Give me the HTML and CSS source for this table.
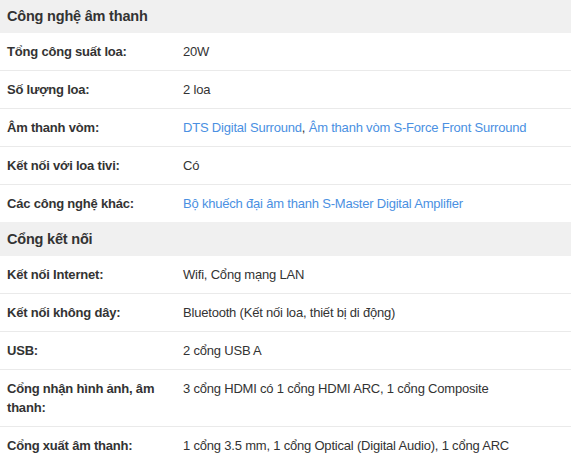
FILE: index.html
```html
<!DOCTYPE html>
<html lang="vi">
<head>
<meta charset="utf-8">
<link rel="stylesheet" href="styles.css">
</head>
<body>
<div class="specs">
  <div class="group">Công nghệ âm thanh</div>
  <div class="row"><div class="label">Tổng công suất loa:</div><div class="value">20W</div></div>
  <div class="row"><div class="label">Số lượng loa:</div><div class="value">2 loa</div></div>
  <div class="row"><div class="label">Âm thanh vòm:</div><div class="value"><a href="#">DTS Digital Surround</a>, <a href="#">Âm thanh vòm S-Force Front Surround</a></div></div>
  <div class="row"><div class="label">Kết nối với loa tivi:</div><div class="value">Có</div></div>
  <div class="row"><div class="label">Các công nghệ khác:</div><div class="value"><a href="#">Bộ khuếch đại âm thanh S-Master Digital Amplifier</a></div></div>
  <div class="group second">Cổng kết nối</div>
  <div class="row"><div class="label">Kết nối Internet:</div><div class="value">Wifi, Cổng mạng LAN</div></div>
  <div class="row"><div class="label">Kết nối không dây:</div><div class="value">Bluetooth (Kết nối loa, thiết bị di động)</div></div>
  <div class="row"><div class="label">USB:</div><div class="value">2 cổng USB A</div></div>
  <div class="row"><div class="label">Cổng nhận hình ảnh, âm thanh:</div><div class="value">3 cổng HDMI có 1 cổng HDMI ARC, 1 cổng Composite</div></div>
  <div class="row"><div class="label">Cổng xuất âm thanh:</div><div class="value">1 cổng 3.5 mm, 1 cổng Optical (Digital Audio), 1 cổng ARC</div></div>
</div>
</body>
</html>
```
FILE: styles.css
```css
html, body {
  margin: 0;
  padding: 0;
  background: #fff;
}
body {
  font-family: "Liberation Sans", Arial, sans-serif;
  font-size: 13px;
  color: #333;
}
.specs {
  width: 571px;
}
.group {
  background: #f0f0f0;
  font-weight: bold;
  font-size: 14.5px;
  letter-spacing: -0.2px;
  color: #333;
  padding: 0 7px;
  height: 33px;
  line-height: 33px;
}
.group.second {
  height: 34px;
  line-height: 34px;
}
.row {
  display: grid;
  grid-template-columns: 176px 1fr;
  padding: 9px 7px;
  line-height: 19px;
  letter-spacing: -0.2px;
  border-top: 1px solid #eaeaea;
}
.group + .row {
  border-top: none;
}
.label {
  font-weight: bold;
  padding-right: 14px;
}
.value a {
  color: #4a90e2;
  text-decoration: none;
}
```
